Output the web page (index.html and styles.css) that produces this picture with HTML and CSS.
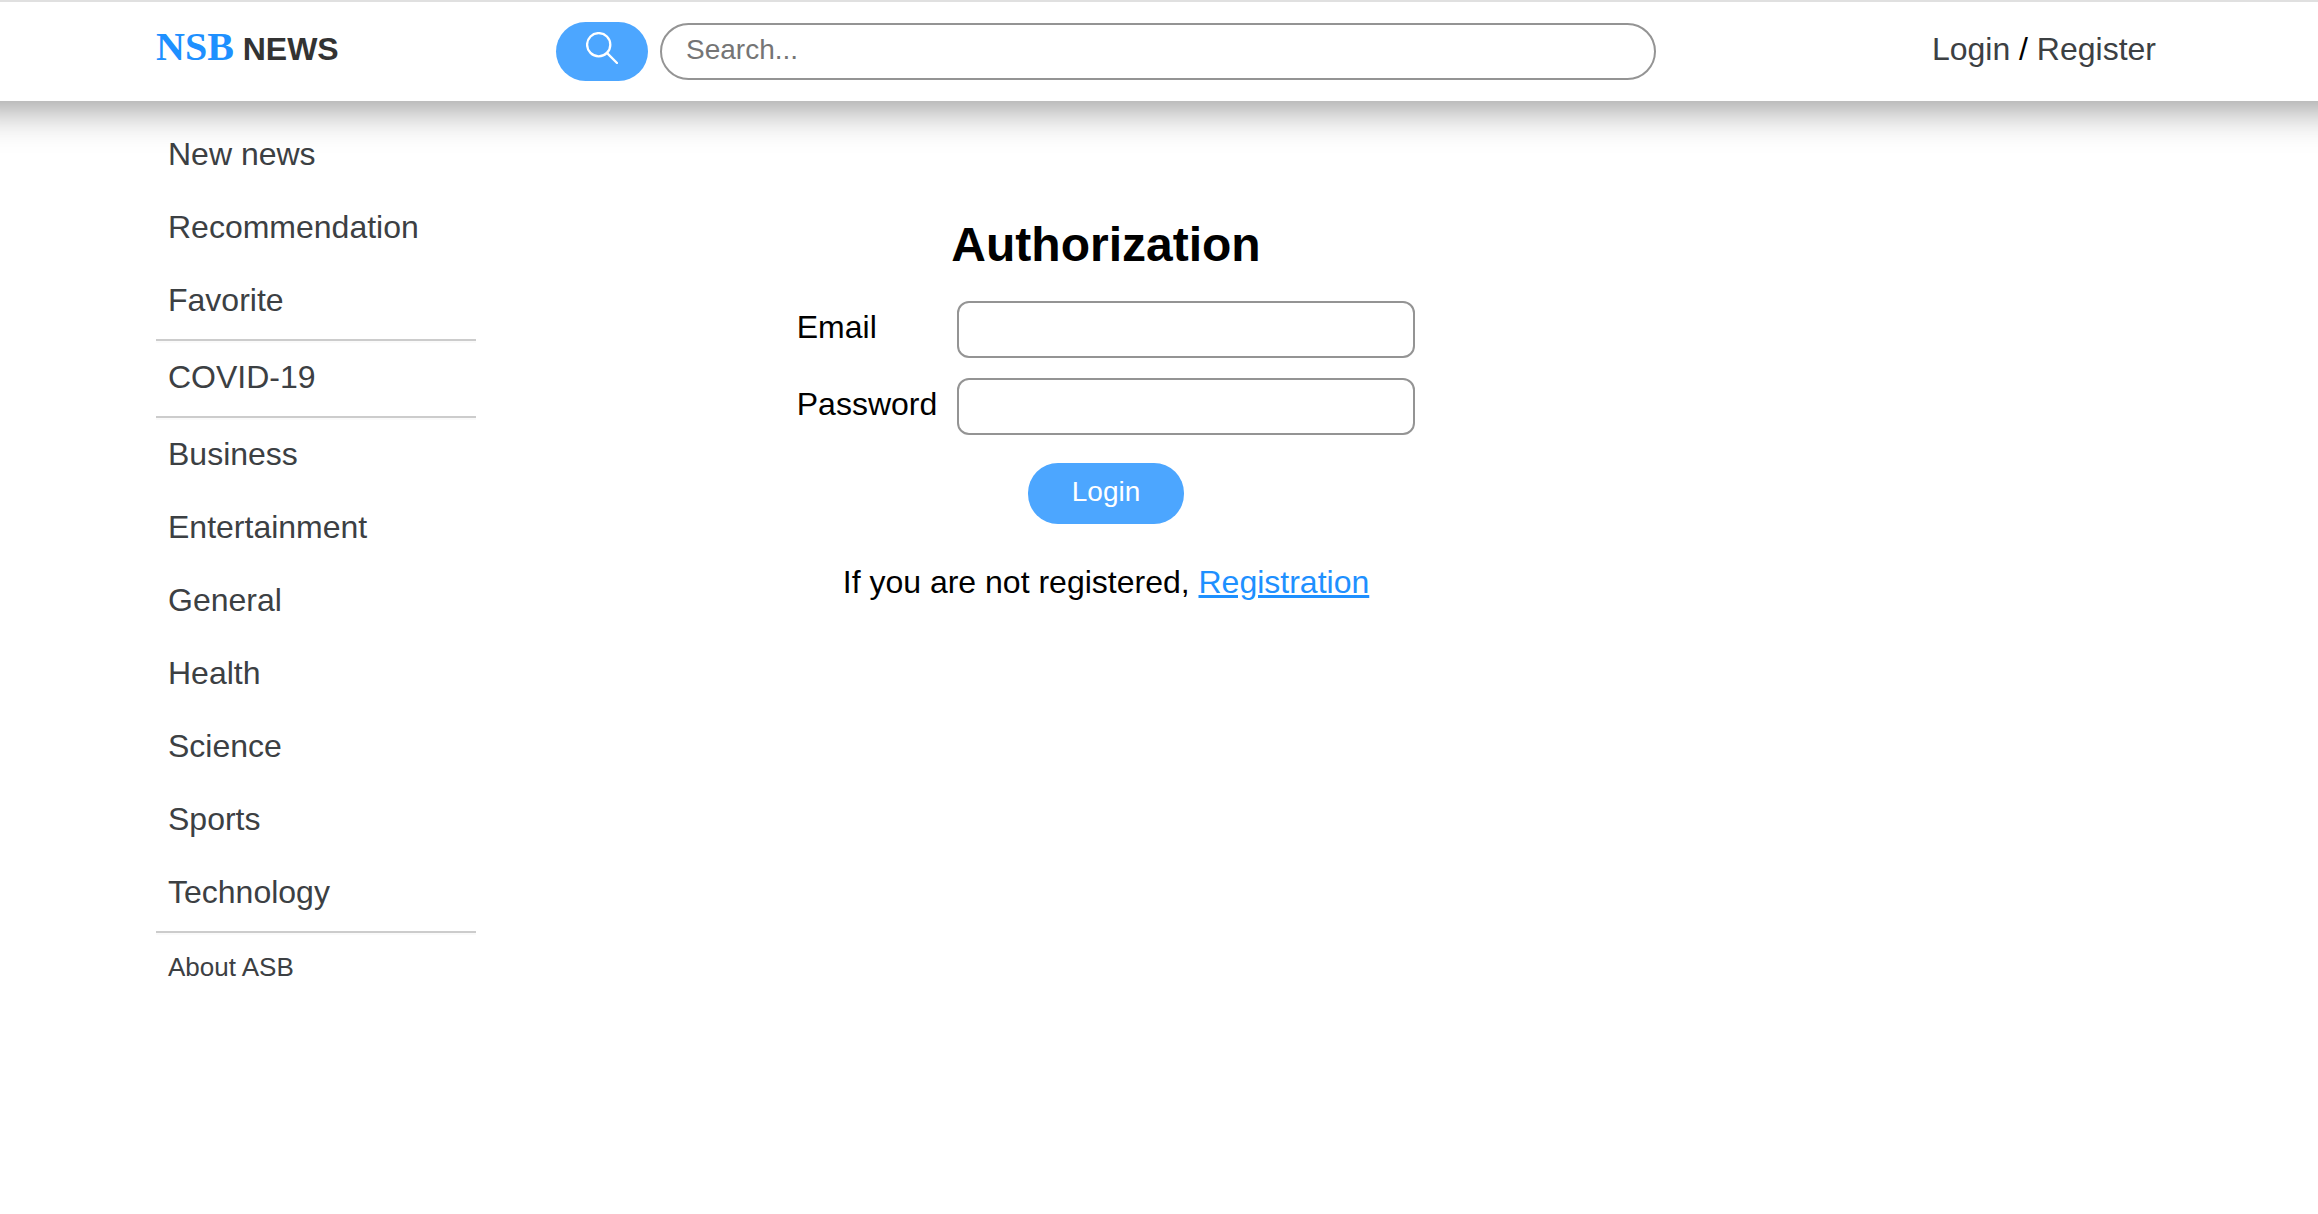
FILE: index.html
```html
<!DOCTYPE html>
<html lang="en">
<head>
  <meta charset="utf-8">
  <meta name="viewport" content="width=device-width, initial-scale=1">
  <title>NSB News</title>
  <link rel="stylesheet" href="styles.css">
</head>
<body>
  <header class="header">
    <div class="layout header-row">
      <a class="logo" href="#"><span class="logo-mark">NSB</span> NEWS</a>
      <form class="search">
        <button class="button search-button" type="submit" aria-label="Search">
          <svg class="search-icon" viewBox="0 0 32 32" fill="none" stroke="#fff" stroke-linecap="round" aria-hidden="true">
            <circle cx="12.7" cy="12.7" r="11.6" stroke-width="2.3"/>
            <path d="M20.9 20.9L31 31" stroke-width="2.3"/>
          </svg>
        </button>
        <input class="field search-field" type="search" placeholder="Search..." aria-label="Search news">
      </form>
      <nav class="account">
        <a href="#">Login</a> / <a href="#">Register</a>
      </nav>
    </div>
  </header>
  <div class="layout page">
    <nav class="menu">
      <a class="menu-link" href="#">New news</a>
      <a class="menu-link" href="#">Recommendation</a>
      <a class="menu-link" href="#">Favorite</a>
      <hr class="rule">
      <a class="menu-link" href="#">COVID-19</a>
      <hr class="rule">
      <a class="menu-link" href="#">Business</a>
      <a class="menu-link" href="#">Entertainment</a>
      <a class="menu-link" href="#">General</a>
      <a class="menu-link" href="#">Health</a>
      <a class="menu-link" href="#">Science</a>
      <a class="menu-link" href="#">Sports</a>
      <a class="menu-link" href="#">Technology</a>
      <hr class="rule">
      <a class="menu-link menu-link-small" href="#">About ASB</a>
    </nav>
    <main class="content">
      <h1 class="title">Authorization</h1>
      <form class="login">
        <div class="login-fields">
          <label class="label" for="email">Email</label>
          <input class="field" id="email" type="email">
          <label class="label" for="password">Password</label>
          <input class="field" id="password" type="password">
        </div>
        <button class="button login-button" type="submit">Login</button>
      </form>
      <p class="hint">If you are not registered, <a class="hint-link" href="#">Registration</a></p>
    </main>
  </div>
</body>
</html>
```
FILE: styles.css
```css
*,
*::before,
*::after {
  box-sizing: border-box;
}

body {
  margin: 0;
  background: #fff;
  color: #000;
  font: 32px/37px "Liberation Sans", Arial, Helvetica, sans-serif;
}

.layout {
  display: grid;
  grid-template-columns: 320px minmax(0, 1fr) 420px;
  column-gap: 80px;
  padding: 0 162px 0 156px;
}

/* Header */

/* The shadow is spread past the sides so it stays even across the window. */
.header {
  border-top: 2px solid #e0e0e0;
  background: #fff;
  box-shadow: 0 -32px 36px 40px rgba(0, 0, 0, 0.4);
}

.header-row {
  align-items: start;
  padding-top: 20px;
  padding-bottom: 20px;
}

.logo {
  padding-top: 2px;
  color: #333;
  font-weight: bold;
  line-height: 46px;
  text-decoration: none;
}

.logo-mark {
  color: #1e90ff;
  font-family: "Liberation Serif", "Times New Roman", serif;
  font-size: 40px;
}

.search {
  display: flex;
  align-items: center;
  gap: 12px;
}

.button {
  border: 0;
  border-radius: 30px;
  background: #4ca6ff;
  color: #fff;
  font: inherit;
  font-size: 28px;
}

.search-button {
  display: flex;
  justify-content: center;
  width: 92px;
  height: 59px;
  padding: 10px 0 0;
}

.search-icon {
  width: 32px;
  height: 32px;
}

.field {
  min-width: 0;
  height: 57px;
  padding: 0 12px 3px;
  border: 2px solid #949494;
  border-radius: 12px;
  background: #fff;
  font: inherit;
  font-size: 28px;
}

.search-field {
  flex: 1;
  padding: 0 24px 3px;
  border-radius: 30px;
  appearance: none;
}

.search-field::placeholder {
  color: #757575;
}

.account {
  padding-top: 9px;
  text-align: right;
}

.account a {
  color: #3c4043;
  text-decoration: none;
}

/* Side menu */

.page {
  padding-top: 19px;
}

.menu {
  display: flex;
  flex-direction: column;
}

.menu-link {
  padding: 16px 12px 20px;
  color: #3c4043;
  text-decoration: none;
}

.menu-link-small {
  font-size: 26px;
  line-height: 32px;
}

.rule {
  width: 100%;
  margin: 0;
  border: 0;
  border-top: 2px solid #ccc;
  border-bottom: 2px solid #fafafa;
}

/* Authorization */

.content {
  display: flex;
  flex-direction: column;
  align-items: center;
  padding-top: 97px;
}

.title {
  margin: 0;
  font-size: 48px;
  line-height: 56px;
}

.login {
  display: flex;
  flex-direction: column;
  align-items: center;
  gap: 28px;
  padding-top: 28px;
}

.login-fields {
  display: grid;
  grid-template-columns: auto 458px;
  gap: 20px;
}

.label {
  padding-top: 8px;
}

.login-button {
  width: 156px;
  height: 61px;
  padding: 0 0 4px;
}

.hint {
  margin: 0;
  padding-top: 40px;
}

.hint-link {
  color: #1e90ff;
}
```
